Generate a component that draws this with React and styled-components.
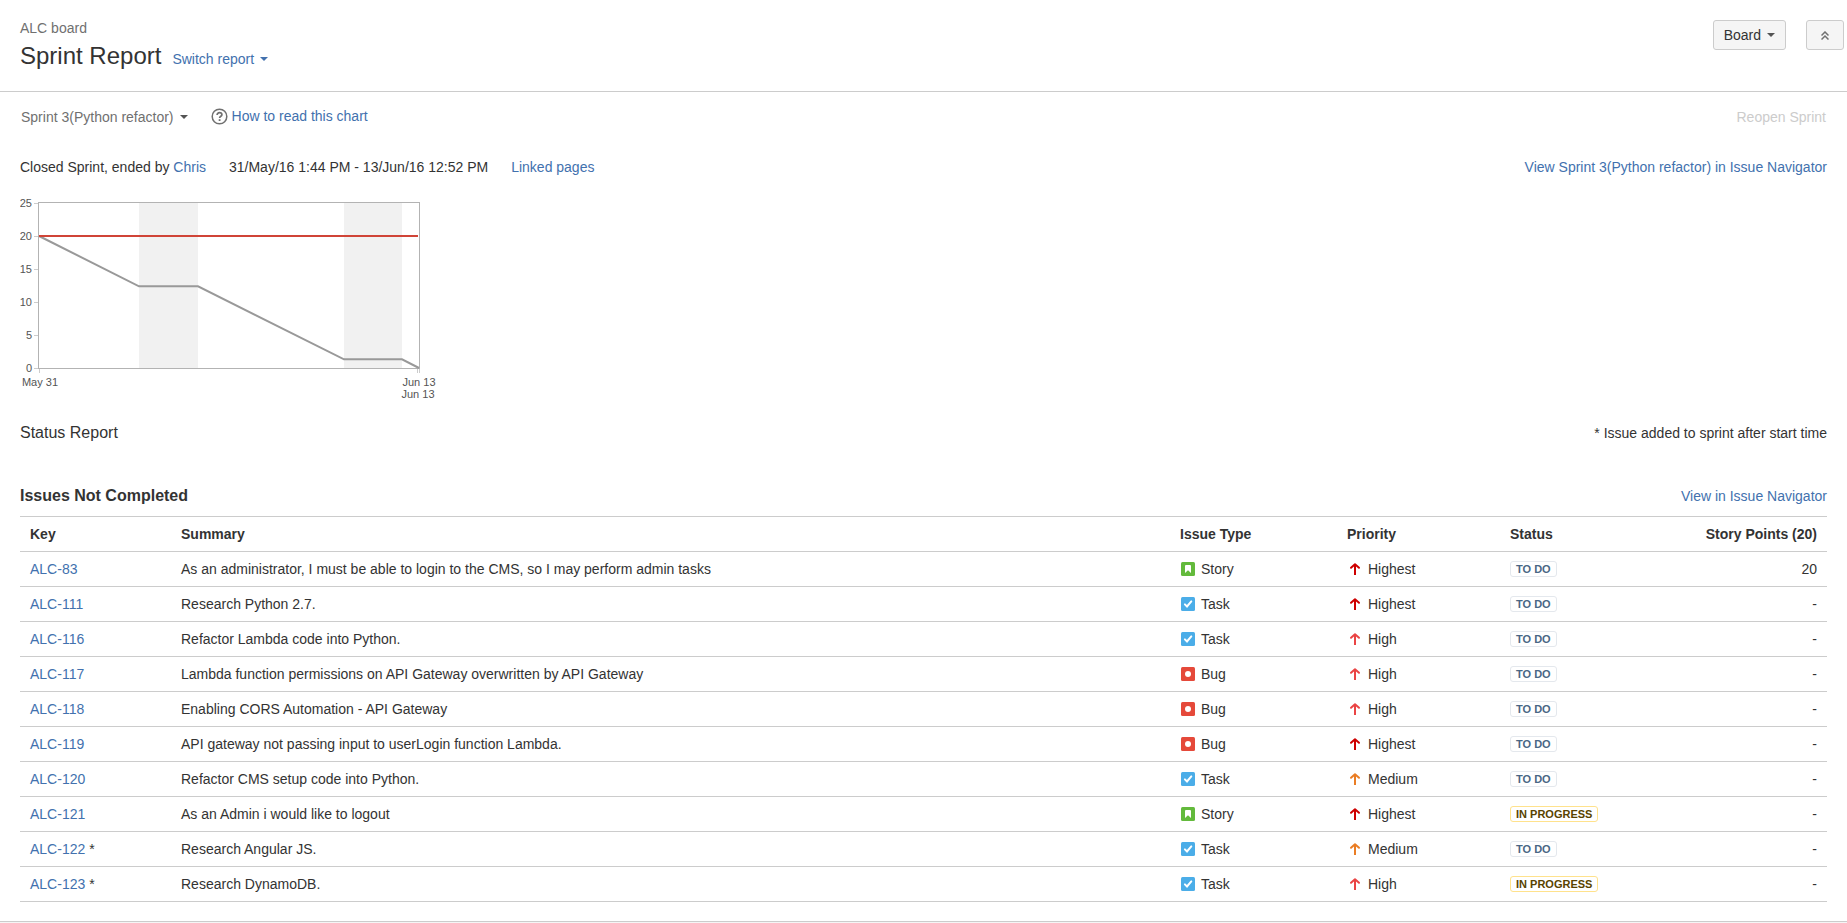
import React from "react";
import styled, { createGlobalStyle } from "styled-components";

const linkColor = "#4271ae";

const GlobalStyle = createGlobalStyle`
  *, *::before, *::after { box-sizing: border-box; }
  html, body { margin: 0; padding: 0; }
  body {
    background: #fff;
    color: #333;
    font-family: "Liberation Sans", Arial, sans-serif;
    font-size: 14px;
    line-height: 20px;
  }
  h1, h2, h3, p { margin: 0; }
`;

const Page = styled.div`
  display: flex;
  flex-direction: column;
  min-height: 100vh;
`;

const Header = styled.header`
  display: flex;
  justify-content: space-between;
  padding: 18px 3px 20px 20px;
  border-bottom: 1px solid #ccc;
`;

const Heading = styled.div`
  display: flex;
  flex-direction: column;
  gap: 3px;
`;

const BoardName = styled.p`
  color: #707070;
`;

const TitleRow = styled.div`
  display: flex;
  align-items: baseline;
  gap: 11px;
`;

const Title = styled.h1`
  font-size: 24px;
  font-weight: 400;
  line-height: 30px;
`;

const Actions = styled.div`
  display: flex;
  align-items: flex-start;
  gap: 20px;
  padding-top: 2px;
`;

const Button = styled.button`
  display: flex;
  align-items: center;
  justify-content: center;
  gap: 6px;
  height: 30px;
  min-width: 38px;
  padding: 0 10px;
  border: 1px solid #ccc;
  border-radius: 3px;
  background: #f5f5f5;
  color: #333;
  font: inherit;
  cursor: pointer;
`;

const TextButton = styled.button`
  display: flex;
  align-items: center;
  gap: 6px;
  padding: 0;
  border: 0;
  background: none;
  color: ${(p) => p.$color};
  font: inherit;
  cursor: pointer;

  &:disabled { cursor: default; }
`;

const Caret = styled.span`
  border: 4px solid transparent;
  border-top-color: ${(p) => p.$color};
  border-bottom: 0;
`;

const Link = styled.a`
  color: ${linkColor};
  text-decoration: none;

  &:hover { text-decoration: underline; }
`;

const HelpLink = styled(Link)`
  display: flex;
  align-items: center;
  gap: 4px;
  padding-bottom: 2px;
`;

const Content = styled.main`
  padding: 10px 20px 19px;
`;

const Bar = styled.div`
  display: flex;
  align-items: center;
  justify-content: space-between;
`;

const Toolbar = styled(Bar)`
  height: 30px;
  margin-bottom: 25px;
  padding: 0 1px;
`;

const Group = styled.div`
  display: flex;
  align-items: center;
  gap: 23px;
`;

const Chart = styled.svg`
  display: block;
  margin: 13px 0;
  font-size: 11px;
`;

const StatusBar = styled(Bar)`
  align-items: baseline;
  margin-bottom: 42px;
`;

const SectionBar = styled(Bar)`
  padding-top: 1px;
`;

const SectionTitle = styled.h2`
  font-size: 16px;
  font-weight: ${(p) => (p.$strong ? 700 : 400)};
`;

const IssueTable = styled.table`
  width: 100%;
  margin-top: 10px;
  border-top: 1px solid #ccc;
  border-spacing: 0;
  table-layout: fixed;
`;

const Column = styled.col`
  width: ${(p) => p.$width};
`;

const HeadCell = styled.th`
  height: 35px;
  padding: 0 10px;
  border-bottom: 1px solid #ccc;
  text-align: ${(p) => p.$align || "left"};
`;

const Cell = styled.td`
  height: 35px;
  padding: 0 10px;
  border-bottom: 1px solid #ccc;
  text-align: ${(p) => p.$align || "left"};
`;

const IconLabel = styled.span`
  display: flex;
  align-items: center;
  gap: 5px;
`;

const tones = {
  "To Do": { border: "#e4e8ed", text: "#4a6785" },
  "In Progress": { border: "#ffe28c", text: "#594300" },
};

const Lozenge = styled.span`
  display: block;
  width: fit-content;
  padding: 0 5px;
  border: 1px solid ${(p) => tones[p.$status].border};
  border-radius: 3px;
  color: ${(p) => tones[p.$status].text};
  font-size: 11px;
  font-weight: 700;
  line-height: 14px;
  text-transform: uppercase;
`;

const Footer = styled.footer`
  flex: 1;
  min-height: 2px;
  border-top: 1px solid #ccc;
  background: #f5f5f5;
`;

function HelpIcon() {
  return (
    <svg width="17" height="17" viewBox="0 0 17 17" fill="none" stroke="#707070" aria-hidden="true">
      <circle cx="8.5" cy="8.5" r="7.3" strokeWidth="1.5" />
      <path d="M6.1 7.1C6.1 5.5 7.1 4.6 8.5 4.6S10.9 5.5 10.9 6.7C10.9 8.3 8.6 8.3 8.6 10.1" strokeWidth="1.7" />
      <path d="M8.6 11.2V13" strokeWidth="1.8" />
    </svg>
  );
}

function CollapseIcon() {
  return (
    <svg width="8" height="9" viewBox="0 0 8 9" fill="none" stroke="#707070" strokeWidth="1.5" aria-hidden="true">
      <path d="M0.5 4.5L4 1L7.5 4.5M0.5 8.5L4 5L7.5 8.5" />
    </svg>
  );
}

function TypeIcon({ type }) {
  return (
    <svg width="16" height="16" viewBox="0 0 16 16" aria-hidden="true">
      {type === "Story" && (
        <>
          <rect x="1" y="1" width="14" height="14" rx="1.5" fill="#63ba3c" />
          <path d="M6 4H10Q11 4 11 5V12L8 9.2L5 12V5Q5 4 6 4Z" fill="#fff" />
        </>
      )}
      {type === "Task" && (
        <>
          <rect x="1" y="1" width="14" height="14" rx="1.5" fill="#4bade8" />
          <path d="M4.9 8.4L7 10.5L11.3 5.4" fill="none" stroke="#fff" strokeWidth="2" strokeLinecap="round" />
        </>
      )}
      {type === "Bug" && (
        <>
          <rect x="1" y="1" width="14" height="14" rx="1.5" fill="#e5493a" />
          <circle cx="8" cy="8" r="3" fill="#fff" />
        </>
      )}
    </svg>
  );
}

const priorityColors = { Highest: "#ce0000", High: "#ea4444", Medium: "#ea7d24" };

function PriorityIcon({ level }) {
  return (
    <svg width="16" height="16" viewBox="0 0 16 16" fill="none" stroke={priorityColors[level]} strokeWidth="2" aria-hidden="true">
      <path d="M8 3V14" />
      <path d="M4 6.8L8 3.2L12 6.8" strokeLinecap="round" strokeLinejoin="round" />
    </svg>
  );
}

const yTicks = [
  { value: 25, y: 13 },
  { value: 20, y: 46 },
  { value: 15, y: 79 },
  { value: 10, y: 112 },
  { value: 5, y: 145 },
  { value: 0, y: 178 },
];

function BurndownChart() {
  return (
    <Chart width="420" height="220" viewBox="0 0 420 220" role="img" aria-label="Sprint burndown">
      <rect x="119" y="13" width="59" height="165" fill="#f1f1f1" />
      <rect x="324" y="13" width="58" height="165" fill="#f1f1f1" />
      <rect x="18.5" y="12.5" width="381" height="166" fill="none" stroke="#b3b3b3" />
      {yTicks.map((t) => (
        <g key={t.value}>
          <path d={`M14 ${t.y + 0.5}H18`} stroke="#ccc" />
          <text x="12" y={t.y + 4} textAnchor="end" fill="#545454">{t.value}</text>
        </g>
      ))}
      <path d="M19.5 179V183M397.5 179V183M399.5 179V183" stroke="#ccc" />
      <path d="M19 46L119 96.3H178L324 169.3H382L399 178" fill="none" stroke="#999" strokeWidth="2" />
      <path d="M19 46H398" stroke="#d04437" strokeWidth="2" />
      <text x="20" y="196" textAnchor="middle" fill="#545454">May 31</text>
      <text x="399" y="196" textAnchor="middle" fill="#545454">Jun 13</text>
      <text x="398" y="208" textAnchor="middle" fill="#545454">Jun 13</text>
    </Chart>
  );
}

const issues = [
  { key: "ALC-83", summary: "As an administrator, I must be able to login to the CMS, so I may perform admin tasks", type: "Story", priority: "Highest", status: "To Do", points: "20" },
  { key: "ALC-111", summary: "Research Python 2.7.", type: "Task", priority: "Highest", status: "To Do" },
  { key: "ALC-116", summary: "Refactor Lambda code into Python.", type: "Task", priority: "High", status: "To Do" },
  { key: "ALC-117", summary: "Lambda function permissions on API Gateway overwritten by API Gateway", type: "Bug", priority: "High", status: "To Do" },
  { key: "ALC-118", summary: "Enabling CORS Automation - API Gateway", type: "Bug", priority: "High", status: "To Do" },
  { key: "ALC-119", summary: "API gateway not passing input to userLogin function Lambda.", type: "Bug", priority: "Highest", status: "To Do" },
  { key: "ALC-120", summary: "Refactor CMS setup code into Python.", type: "Task", priority: "Medium", status: "To Do" },
  { key: "ALC-121", summary: "As an Admin i would like to logout", type: "Story", priority: "Highest", status: "In Progress" },
  { key: "ALC-122", added: true, summary: "Research Angular JS.", type: "Task", priority: "Medium", status: "To Do" },
  { key: "ALC-123", added: true, summary: "Research DynamoDB.", type: "Task", priority: "High", status: "In Progress" },
];

function IssueRow({ issue }) {
  return (
    <tr>
      <Cell>
        <Link href="#">{issue.key}</Link>
        {issue.added && " *"}
      </Cell>
      <Cell>{issue.summary}</Cell>
      <Cell>
        <IconLabel>
          <TypeIcon type={issue.type} />
          {issue.type}
        </IconLabel>
      </Cell>
      <Cell>
        <IconLabel>
          <PriorityIcon level={issue.priority} />
          {issue.priority}
        </IconLabel>
      </Cell>
      <Cell>
        <Lozenge $status={issue.status}>{issue.status}</Lozenge>
      </Cell>
      <Cell $align="right">{issue.points || "-"}</Cell>
    </tr>
  );
}

export default function App() {
  return (
    <Page>
      <GlobalStyle />
      <Header>
        <Heading>
          <BoardName>ALC board</BoardName>
          <TitleRow>
            <Title>Sprint Report</Title>
            <TextButton type="button" $color={linkColor}>
              Switch report
              <Caret $color={linkColor} />
            </TextButton>
          </TitleRow>
        </Heading>
        <Actions>
          <Button type="button">
            Board
            <Caret $color="#545454" />
          </Button>
          <Button type="button" aria-label="Collapse header">
            <CollapseIcon />
          </Button>
        </Actions>
      </Header>

      <Content>
        <Toolbar>
          <Group>
            <TextButton type="button" $color="#707070">
              Sprint 3(Python refactor)
              <Caret $color="#545454" />
            </TextButton>
            <HelpLink href="#">
              <HelpIcon />
              How to read this chart
            </HelpLink>
          </Group>
          <TextButton type="button" $color="#ccc" disabled>
            Reopen Sprint
          </TextButton>
        </Toolbar>

        <Bar>
          <Group>
            <span>
              Closed Sprint, ended by <Link href="#">Chris</Link>
            </span>
            <span>31/May/16 1:44 PM - 13/Jun/16 12:52 PM</span>
            <Link href="#">Linked pages</Link>
          </Group>
          <Link href="#">View Sprint 3(Python refactor) in Issue Navigator</Link>
        </Bar>

        <BurndownChart />

        <StatusBar>
          <SectionTitle>Status Report</SectionTitle>
          <span>* Issue added to sprint after start time</span>
        </StatusBar>

        <SectionBar>
          <SectionTitle $strong>Issues Not Completed</SectionTitle>
          <Link href="#">View in Issue Navigator</Link>
        </SectionBar>
        <IssueTable>
          <colgroup>
            <Column $width="151px" />
            <Column $width="auto" />
            <Column $width="167px" />
            <Column $width="163px" />
            <Column $width="150px" />
            <Column $width="177px" />
          </colgroup>
          <thead>
            <tr>
              <HeadCell>Key</HeadCell>
              <HeadCell>Summary</HeadCell>
              <HeadCell>Issue Type</HeadCell>
              <HeadCell>Priority</HeadCell>
              <HeadCell>Status</HeadCell>
              <HeadCell $align="right">Story Points (20)</HeadCell>
            </tr>
          </thead>
          <tbody>
            {issues.map((issue) => (
              <IssueRow key={issue.key} issue={issue} />
            ))}
          </tbody>
        </IssueTable>
      </Content>
      <Footer />
    </Page>
  );
}
